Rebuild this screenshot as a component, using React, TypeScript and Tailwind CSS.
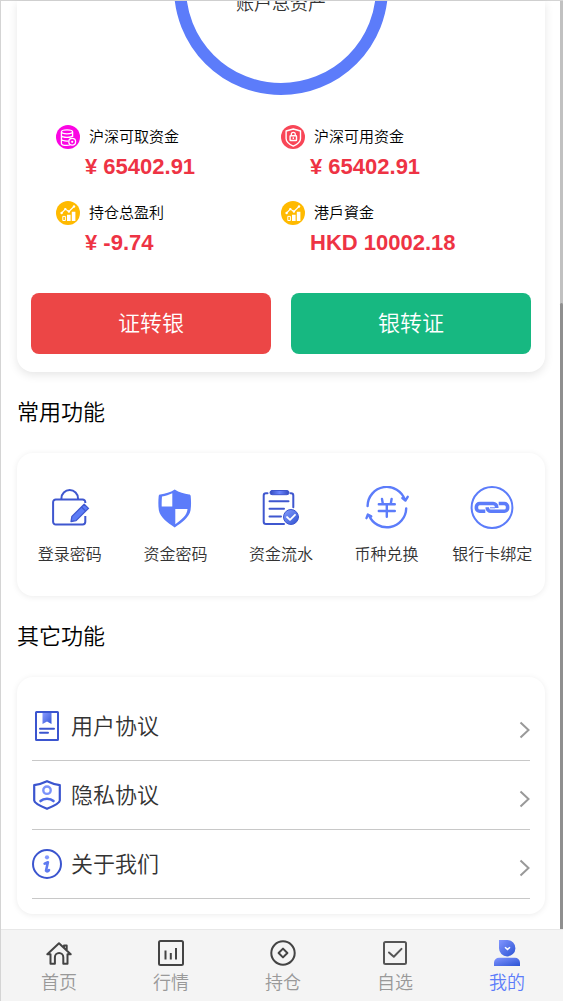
import type { ReactNode } from "react";

/* Account stat icons */
function CoinsIcon() {
  return (
    <svg viewBox="0 0 24 24" className="size-6 shrink-0" fill="none" stroke="#fff" aria-hidden="true">
      <circle cx="12" cy="12" r="12" fill="#fb05e3" stroke="none" />
      <ellipse cx="11" cy="6.8" rx="5.6" ry="2" strokeWidth="1.3" />
      <path d="M5.4 7v11.2c0 1.3 2.4 2.2 5.4 2.2 1.2 0 2.2-.1 3-.4M16.6 7v5M5.4 10.6c.6 1.2 2.8 1.8 5.6 1.8s5-.6 5.6-1.8M5.4 14.3c.6 1.2 2.8 1.8 5.4 1.8h1.4" strokeWidth="1.3" />
      <circle cx="16.2" cy="16.8" r="3.4" strokeWidth="1.3" />
      <circle cx="16.2" cy="16.8" r="1.1" fill="#fff" stroke="none" />
    </svg>
  );
}

function LockIcon() {
  return (
    <svg viewBox="0 0 24 24" className="size-6 shrink-0" fill="none" stroke="#fff" aria-hidden="true">
      <circle cx="12" cy="12" r="12" fill="#f84657" stroke="none" />
      <path d="M12.3 4 19.5 6v7.5c0 3.6-3.2 5.8-7.2 7.6-4-1.8-7.2-4-7.2-7.6V6z" strokeWidth="1.4" strokeLinejoin="round" />
      <rect x="9.1" y="10.8" width="6.4" height="4.7" rx=".6" strokeWidth="1.4" />
      <path d="M10.3 10.6V9.4a2 2 0 0 1 4 0v1.2M12.3 12.3v1.6" strokeWidth="1.3" />
    </svg>
  );
}

function GrowthIcon() {
  return (
    <svg viewBox="0 0 24 24" className="size-6 shrink-0" fill="none" stroke="#fff" aria-hidden="true">
      <circle cx="12" cy="12" r="12" fill="#ffba00" stroke="none" />
      <path d="m5.6 12 3.7-3.9 3.6 2.4 5.1-5" strokeWidth="1.1" />
      <g fill="#fff" stroke="none">
        <circle cx="5.6" cy="12" r="1.2" />
        <circle cx="9.3" cy="8.1" r="1.2" />
        <circle cx="12.9" cy="10.5" r="1.2" />
        <circle cx="18" cy="5.5" r="1.2" />
        <path d="M11 13.8h3.6V20H11zM15.8 10.7h3.6V20h-3.6z" />
      </g>
      <path d="M6.8 15.4h2.6v4.1H6.8z" />
    </svg>
  );
}

/* Feature icons */
function BagPencilIcon() {
  return (
    <svg viewBox="0 0 44 44" className="size-11" fill="none" stroke="#3f57cf" strokeWidth="2" aria-hidden="true">
      <path d="M13.4 13v-.6a8.3 8.3 0 0 1 16.6 0v.6" />
      <path d="M37.3 17v-.8a2.7 2.7 0 0 0-2.7-2.7H7.8a2.7 2.7 0 0 0-2.7 2.7v19.6a2.7 2.7 0 0 0 2.7 2.7h26.8a2.7 2.7 0 0 0 2.7-2.7V30" />
      <path d="m23 35.5.9-5.1L36.2 18.2l4.3 4.2-12.4 12.2z" fill="#5c7cf6" strokeWidth="1.3" strokeLinejoin="round" />
      <path d="m33.5 21 4.2 4.2" strokeWidth="1.2" />
    </svg>
  );
}

function ShieldIcon() {
  return (
    <svg viewBox="0 0 44 44" className="size-11" aria-hidden="true">
      <path d="M21.7 3.5c4.4 2.8 9.4 4.4 14.4 5 1 0 1.5.6 1.6 1.5.4 4.4.6 9.6-.2 14.5-1.3 6.8-8.5 11.9-15.8 17-7.3-5.1-14.5-10.2-15.8-17-.8-4.9-.6-10.1-.2-14.5.1-.9.6-1.5 1.6-1.5 5-.6 10-2.2 14.400-5z" fill="#5c7cfa" />
      <path d="M19.3 7.3v13.2H8.700c-.1-3.400 0-6.700.3-9.900 3.800-.7 7.100-1.700 10.300-3.300zM22.300 23.100h12.200c-.4 6.300-6 10.700-12.200 15.100z" fill="#fff" />
    </svg>
  );
}

function ClipboardIcon() {
  return (
    <svg viewBox="0 0 44 44" className="size-11" fill="none" stroke="#3f57cf" strokeWidth="2" strokeLinecap="round" aria-hidden="true">
      <defs>
        <linearGradient id="clipTone">
          <stop offset="0" stopColor="#344bbd" />
          <stop offset=".5" stopColor="#6b86ff" />
          <stop offset="1" stopColor="#344bbd" />
        </linearGradient>
        <linearGradient id="badgeTone" x2="1" y2="1">
          <stop offset="0" stopColor="#88a0ff" />
          <stop offset="1" stopColor="#2d50d0" />
        </linearGradient>
      </defs>
      <path d="M8.5 7.2H7A2.3 2.3 0 0 0 4.700 9.500v26.200A2.300 2.300 0 0 0 7 38h18M31.500 7.200H32a2.300 2.300 0 0 1 2.300 2.300v11.800M10.500 15.200h19M10.500 22.700h14.500M10.500 30.500h11.500" />
      <rect x="11" y="4.5" width="19" height="4.2" rx="2" fill="url(#clipTone)" strokeWidth="1" />
      <circle cx="32" cy="31" r="7.5" fill="url(#badgeTone)" strokeWidth="1" />
      <path d="m28 31 3 2.800 5-5" stroke="#fff" strokeWidth="1.8" strokeLinejoin="round" />
    </svg>
  );
}

function ExchangeIcon() {
  return (
    <svg viewBox="0 0 44 44" className="size-11" fill="none" stroke="#5c7cfa" strokeWidth="2.4" strokeLinecap="round" strokeLinejoin="round" aria-hidden="true">
      <path d="M2.600 20A19.200 19.200 0 0 1 40 14M37.400 12 40.400 14.600 42.700 10.800" />
      <path d="M41.200 22.500A19.300 19.300 0 0 1 4 29.200M1.500 32.200l1.300-3.600 3.400 1.800" />
      <path d="m17 13 .8 4.600M26.600 13l-.8 4.600M13.800 18.300h16M13.800 25h16M21.800 18.300v12.500" />
    </svg>
  );
}

function LinkIcon() {
  return (
    <svg viewBox="0 0 44 44" className="size-11" fill="none" stroke="#5c7cfa" aria-hidden="true">
      <circle cx="22" cy="21.5" r="20.4" strokeWidth="2" />
      <g strokeWidth="3.6">
        <path d="M15.300 25.300H9.700A3.300 3.300 0 0 1 6.400 22v-1.200a3.300 3.300 0 0 1 3.300-3.300h13.500a3.500 3.500 0 0 1 3.500 3.500v.9" />
        <path d="M17.300 21.200v.6a3.500 3.500 0 0 0 3.500 3.500h13.500a3.300 3.300 0 0 0 3.300-3.300v-1.200a3.300 3.300 0 0 0-3.300-3.300h-5.600" />
      </g>
      <path d="M20 21.800h5" strokeWidth="1" />
    </svg>
  );
}

/* List icons */
function BookIcon() {
  return (
    <svg viewBox="0 0 30 30" className="size-[30px]" fill="none" stroke="#3b55cf" strokeWidth="2" aria-hidden="true">
      <defs>
        <linearGradient id="markTone" x2="1" y2="1">
          <stop offset="0" stopColor="#8b9bff" />
          <stop offset="1" stopColor="#3457d8" />
        </linearGradient>
      </defs>
      <path d="M10.500 1.500h9v11.600L15 10.500l-4.500 2.600z" fill="url(#markTone)" stroke="none" />
      <rect x="4" y="1" width="22" height="28" rx=".5" />
      <path d="M8 17.800h14M8 21.800h8" strokeLinecap="round" />
    </svg>
  );
}

function PrivacyIcon() {
  return (
    <svg viewBox="0 0 30 30" className="size-[30px]" fill="none" stroke="#3b55cf" strokeWidth="2.2" aria-hidden="true">
      <path d="M15 1.200c4 1.900 8.300 3.200 12.800 4v15.300c0 2.700-7.300 6-12.800 8.300-5.500-2.300-12.800-5.600-12.800-8.300V5.200c4.500-.8 8.800-2.100 12.800-4z" strokeLinejoin="round" />
      <circle cx="15" cy="10.200" r="3.700" stroke="#7b93fb" strokeWidth="2.4" />
      <path d="M8.500 21c3.300-3 9.700-3 13 0" stroke="#4d6ae6" strokeWidth="2.6" strokeLinecap="round" />
    </svg>
  );
}

function InfoIcon() {
  return (
    <svg viewBox="0 0 30 30" className="size-[30px]" fill="none" stroke="#3b55cf" strokeWidth="2" aria-hidden="true">
      <circle cx="15" cy="15" r="14" />
      <circle cx="15" cy="8.3" r="2.1" fill="#8399ff" stroke="none" />
      <path d="m12.600 14.600 3.300-1.300-1.900 8.500c.9 1.100 2.200.5 3-.8" stroke="#5f7bf0" strokeWidth="2.6" strokeLinecap="round" strokeLinejoin="round" />
    </svg>
  );
}

/* Tab icons */
function HomeIcon() {
  return (
    <svg viewBox="0 0 26 26" className="size-[26px]" fill="none" stroke="#444" strokeWidth="2" strokeLinejoin="round" strokeLinecap="round" aria-hidden="true">
      <path d="M4.500 14.300H1.300L13 3.200l11.700 11.100h-3.200v9.500h-4.200v-6.500a4.200 4.200 0 0 0-8.400 0v6.500H4.500zM18 7.300V5.500h2.700v5" />
    </svg>
  );
}

function ChartIcon() {
  return (
    <svg viewBox="0 0 26 26" className="size-[26px]" fill="none" stroke="#444" strokeWidth="2" aria-hidden="true">
      <rect x="1" y="1" width="24" height="24" rx="1.5" />
      <path d="M7.500 10.500v9M12.800 13v6.500M18 8v11.500" />
    </svg>
  );
}

function PositionIcon() {
  return (
    <svg viewBox="0 0 26 26" className="size-[26px]" fill="none" stroke="#444" strokeWidth="2" strokeLinejoin="round" aria-hidden="true">
      <circle cx="13" cy="13" r="11.7" />
      <path d="m13 8.600 4.400 4.400-4.400 4.400L8.600 13z" />
    </svg>
  );
}

function WatchIcon() {
  return (
    <svg viewBox="0 0 26 26" className="size-[26px]" fill="none" stroke="#555" strokeWidth="2" aria-hidden="true">
      <rect x="2" y="2" width="22" height="22" rx="1.5" />
      <path d="m7 12.500 4.800 4.300 7.700-7.900" strokeLinecap="round" strokeLinejoin="round" />
    </svg>
  );
}

function MineIcon() {
  return (
    <svg viewBox="0 0 26 26" className="size-[26px]" aria-hidden="true">
      <defs>
        <linearGradient id="mineTone" x2="1" y2="1">
          <stop offset="0" stopColor="#8296ff" />
          <stop offset="1" stopColor="#2b53d4" />
        </linearGradient>
      </defs>
      <path d="M5 0h8.500a8.200 8.200 0 1 1-8.500 8.200z" fill="url(#mineTone)" />
      <path d="M5 17.700h16a5 5 0 0 1 5 5V26H0v-3.300a5 5 0 0 1 5-5z" fill="url(#mineTone)" />
      <path d="m11 7.200 2.500 2.200L16 7.200" fill="none" stroke="#fff" strokeWidth="1.5" />
    </svg>
  );
}

const stats = [
  { icon: <CoinsIcon />, label: "沪深可取资金", value: "¥ 65402.91" },
  { icon: <LockIcon />, label: "沪深可用资金", value: "¥ 65402.91" },
  { icon: <GrowthIcon />, label: "持仓总盈利", value: "¥ -9.74" },
  { icon: <GrowthIcon />, label: "港戶資金", value: "HKD 10002.18" },
];

const features = [
  { icon: <BagPencilIcon />, label: "登录密码" },
  { icon: <ShieldIcon />, label: "资金密码" },
  { icon: <ClipboardIcon />, label: "资金流水" },
  { icon: <ExchangeIcon />, label: "币种兑换" },
  { icon: <LinkIcon />, label: "银行卡绑定" },
];

const links = [
  { icon: <BookIcon />, label: "用户协议" },
  { icon: <PrivacyIcon />, label: "隐私协议" },
  { icon: <InfoIcon />, label: "关于我们" },
];

const tabs = [
  { icon: <HomeIcon />, label: "首页" },
  { icon: <ChartIcon />, label: "行情" },
  { icon: <PositionIcon />, label: "持仓" },
  { icon: <WatchIcon />, label: "自选" },
  { icon: <MineIcon />, label: "我的", active: true },
];

function SectionTitle({ children }: { children: ReactNode }) {
  return <h2 className="flex h-[81px] items-center text-[22px] text-black">{children}</h2>;
}

export default function App() {
  return (
    <div className="flex min-h-screen flex-col border-t border-l border-[#d4d4d4] bg-white font-['Liberation_Sans','Noto_Sans_CJK_SC',sans-serif] font-[350] text-[#333]">
      <div className="flex flex-1">
        <main className="min-w-0 flex-1 pr-[15px] pb-3.5 pl-4">
          {/* Account summary */}
          <section className="overflow-hidden rounded-b-2xl shadow-[0_3px_10px_rgba(0,0,0,0.1)]">
            <div className="mx-auto -mt-[120px] flex size-[214px] items-center justify-center rounded-full border-12 border-[#5c7cfa] pt-8">
              <span className="font-['Liberation_Serif','Noto_Sans_CJK_SC',serif] text-lg">账户总资产</span>
            </div>

            <dl className="mt-[30px] grid grid-cols-2 gap-y-[18px] px-[39px]">
              {stats.map((s) => (
                <div key={s.label}>
                  <dt className="flex items-center gap-[9px] text-[15px] leading-6 text-black">
                    {s.icon}
                    {s.label}
                  </dt>
                  <dd className="pt-0.5 pl-[29px] text-[22px] leading-8 font-bold whitespace-nowrap text-[#ee3344]">{s.value}</dd>
                </div>
              ))}
            </dl>

            <div className="mt-[34px] flex gap-5 px-3.5 pb-[18px] text-[22px] text-white">
              <button type="button" className="h-[61px] flex-1 rounded-lg bg-[#ec4646]">
                证转银
              </button>
              <button type="button" className="h-[61px] flex-1 rounded-lg bg-[#17b881]">
                银转证
              </button>
            </div>
          </section>

          {/* Common features */}
          <SectionTitle>常用功能</SectionTitle>
          <section className="grid grid-cols-5 rounded-2xl pt-[33px] pb-[29px] shadow-[0_1px_6px_rgba(0,0,0,0.08)]">
            {features.map((f) => (
              <button key={f.label} type="button" className="flex flex-col items-center gap-[13px] whitespace-nowrap">
                {f.icon}
                <span className="text-base">{f.label}</span>
              </button>
            ))}
          </section>

          {/* Other features */}
          <SectionTitle>其它功能</SectionTitle>
          <section className="rounded-2xl p-[15px] shadow-[0_1px_6px_rgba(0,0,0,0.08)]">
            {links.map((l) => (
              <a key={l.label} href="#" className="flex h-[69px] items-center gap-[9px] border-b border-[#c8c8c8] text-[22px]">
                {l.icon}
                <span className="flex-1">{l.label}</span>
                <svg viewBox="0 0 11 26" className="h-[26px] w-[11px]" fill="none" stroke="#999" strokeWidth="2" aria-hidden="true">
                  <path d="m1.500 9.500 8 7.500-8 7.500" />
                </svg>
              </a>
            ))}
          </section>
        </main>

        {/* Scroll indicator */}
        <div className="flex w-[3px] flex-col bg-[#c1c1c1]">
          <div className="h-[302px]" />
          <div className="flex-1 rounded-t-sm bg-[#8f8f8f]" />
        </div>
      </div>

      {/* Tab bar */}
      <nav className="grid grid-cols-5 border-t border-[#e8e8e8] bg-[#f4f4f4] pt-2.5 pb-1.5 pl-0.5">
        {tabs.map((t) => (
          <a
            key={t.label}
            href="#"
            className={`flex flex-col items-center gap-[5px] text-lg leading-6 ${t.active ? "text-[#5c7cfa]" : "text-[#999]"}`}
          >
            {t.icon}
            {t.label}
          </a>
        ))}
      </nav>
    </div>
  );
}
